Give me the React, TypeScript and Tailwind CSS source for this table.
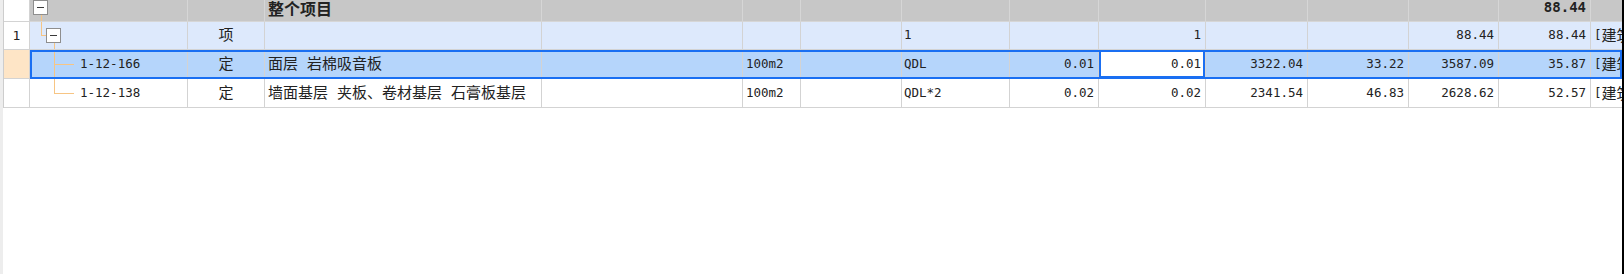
import React from 'react';

const MONO = "font-['DejaVu_Sans_Mono',monospace] text-[12.5px]";
const CJK = "font-['DejaVu_Sans_Mono','Noto_Sans_CJK_SC',sans-serif] text-[15px]";

const widths = [
  'w-[26px]',
  'w-[158px]',
  'w-[77px]',
  'w-[277px]',
  'w-[201px]',
  'w-[58px]',
  'w-[101px]',
  'w-[108px]',
  'w-[89px]',
  'w-[107px]',
  'w-[102px]',
  'w-[101px]',
  'w-[90px]',
  'w-[92px]',
];

// how each column lines up its text
const aligns = [
  'justify-center',
  '',
  `justify-center ${CJK}`,
  `pl-[3px] ${CJK}`,
  `pl-[3px] ${CJK}`,
  `pl-[3px] ${MONO}`,
  `pl-[3px] ${MONO}`,
  `pl-[2px] ${MONO}`,
  `justify-end pr-[4px] ${MONO}`,
  `justify-end pr-[4px] ${MONO}`,
  `justify-end pr-[4px] ${MONO}`,
  `justify-end pr-[4px] ${MONO}`,
  `justify-end pr-[4px] ${MONO}`,
  `justify-end pr-[4px] ${MONO}`,
];

type TreeKind = 'head' | 'group' | 'mid' | 'last';

const ORANGE = '#f7c584';

const Box = ({ x }: { x: number }) => (
  <>
    <rect x={x + 0.5} y={6.5} width={14} height={14} fill="#ffffff" stroke="#8e8e8e" />
    <line x1={x + 4} y1={13.5} x2={x + 11} y2={13.5} stroke="#3a3a3a" />
  </>
);

const TreeLines: React.FC<{ kind: TreeKind; h: number }> = ({ kind, h }) => (
  <svg
    className="absolute left-0 top-0 overflow-visible pointer-events-none"
    width={158}
    height={h}
    shapeRendering="crispEdges"
  >
    {kind === 'head' && (
      <>
        <line x1={11.5} y1={21} x2={11.5} y2={h} stroke={ORANGE} />
        <Box x={3} />
      </>
    )}
    {kind === 'group' && (
      <>
        <line x1={11.5} y1={0} x2={11.5} y2={13.5} stroke={ORANGE} />
        <line x1={11} y1={13.5} x2={16} y2={13.5} stroke={ORANGE} />
        <line x1={24.5} y1={21} x2={24.5} y2={h} stroke={ORANGE} />
        <Box x={16} />
      </>
    )}
    {kind === 'mid' && (
      <>
        <line x1={24.5} y1={0} x2={24.5} y2={h} stroke={ORANGE} />
        <line x1={24} y1={14.5} x2={44} y2={14.5} stroke={ORANGE} />
      </>
    )}
    {kind === 'last' && (
      <>
        <line x1={24.5} y1={0} x2={24.5} y2={14.5} stroke={ORANGE} />
        <line x1={24} y1={14.5} x2={44} y2={14.5} stroke={ORANGE} />
      </>
    )}
  </svg>
);

interface RowProps {
  cells: React.ReactNode[];
  tree: TreeKind;
  h: string;
  hpx: number;
  bg: string;
  numBg: string;
  selected?: boolean;
  editCol?: number;
  bold?: boolean;
  line?: string;
}

const Row: React.FC<RowProps> = ({ cells, tree, h, hpx, bg, numBg, selected, editCol, bold, line = 'border-[#d3d3d3]' }) => (
  <div className={`relative flex ${h} ${bg} text-[#222222]`}>
    {widths.map((w, i) => (
      <div
        key={i}
        className={`relative shrink-0 ${w} h-full flex items-center border-r border-b ${i === 0 ? 'border-[#d3d3d3]' : line} whitespace-nowrap overflow-hidden ${aligns[i]} ${
          i === 0 ? `${numBg} ${MONO} text-[13px]` : ''
        } ${i === editCol ? 'bg-white' : ''} ${bold ? 'font-bold' : ''}`}
      >
        {i === 1 ? (
          <>
            <TreeLines kind={tree} h={hpx} />
            <span className={`relative pl-[50px] ${MONO}`}>{cells[1]}</span>
          </>
        ) : (
          cells[i]
        )}
        {i === editCol && <div className="absolute inset-0 border-2 border-[#1a6ff2] pointer-events-none" />}
      </div>
    ))}
    <div className={`flex-1 min-w-0 h-full flex items-center pl-[3px] border-b ${line} whitespace-nowrap overflow-hidden`}>
      {cells[14]}
    </div>
    {selected && <div className="absolute left-[26px] right-0 top-0 bottom-0 border-2 border-[#1a6ff2] pointer-events-none" />}
  </div>
);

const Tag = () => (
  <span className="flex items-center">
    <span className={MONO}>[</span>
    <span className="font-['Noto_Sans_CJK_SC',sans-serif] text-[15px]">建筑工程]</span>
  </span>
);

export default function App() {
  return (
    <div className="w-[1624px] h-[274px] flex bg-white overflow-hidden">
      <div className="w-[3px] shrink-0 bg-[#ededed]" />
      <div className="flex-1 min-w-0 overflow-hidden">
        <div className="-mt-[6px] border-l border-[#cdcdcd]">
          <Row
            tree="head"
            h="h-[28px]"
            hpx={28}
            bg="bg-[#c7c7c7]"
            numBg="bg-white"
            bold
            line="border-[#d6d6d6]"
            cells={[
              '',
              '',
              '',
              <span className="font-['Noto_Sans_CJK_SC',sans-serif] text-[16px]">整个项目</span>,
              '',
              '',
              '',
              '',
              '',
              '',
              '',
              '',
              '',
              <span className="font-['DejaVu_Sans_Mono',monospace] text-[14px]">88.44</span>,
              '',
            ]}
          />
          <Row
            tree="group"
            h="h-[28px]"
            hpx={28}
            bg="bg-[#dde9fc]"
            numBg="bg-white"
            cells={['1', '', '项', '', '', '', '', '1', '', '1', '', '', '88.44', '88.44', <Tag />]}
          />
          <Row
            tree="mid"
            h="h-[29px]"
            hpx={29}
            bg="bg-[#b5d5fb]"
            numBg="bg-[#fee5c6]"
            selected
            editCol={9}
            cells={['', '1-12-166', '定', '面层 岩棉吸音板', '', '100m2', '', 'QDL', '0.01', '0.01', '3322.04', '33.22', '3587.09', '35.87', <Tag />]}
          />
          <Row
            tree="last"
            h="h-[29px]"
            hpx={29}
            bg="bg-white"
            numBg="bg-white"
            cells={['', '1-12-138', '定', '墙面基层 夹板、卷材基层 石膏板基层', '', '100m2', '', 'QDL*2', '0.02', '0.02', '2341.54', '46.83', '2628.62', '52.57', <Tag />]}
          />
        </div>
      </div>
      <div className="w-[2px] shrink-0 bg-black" />
    </div>
  );
}
